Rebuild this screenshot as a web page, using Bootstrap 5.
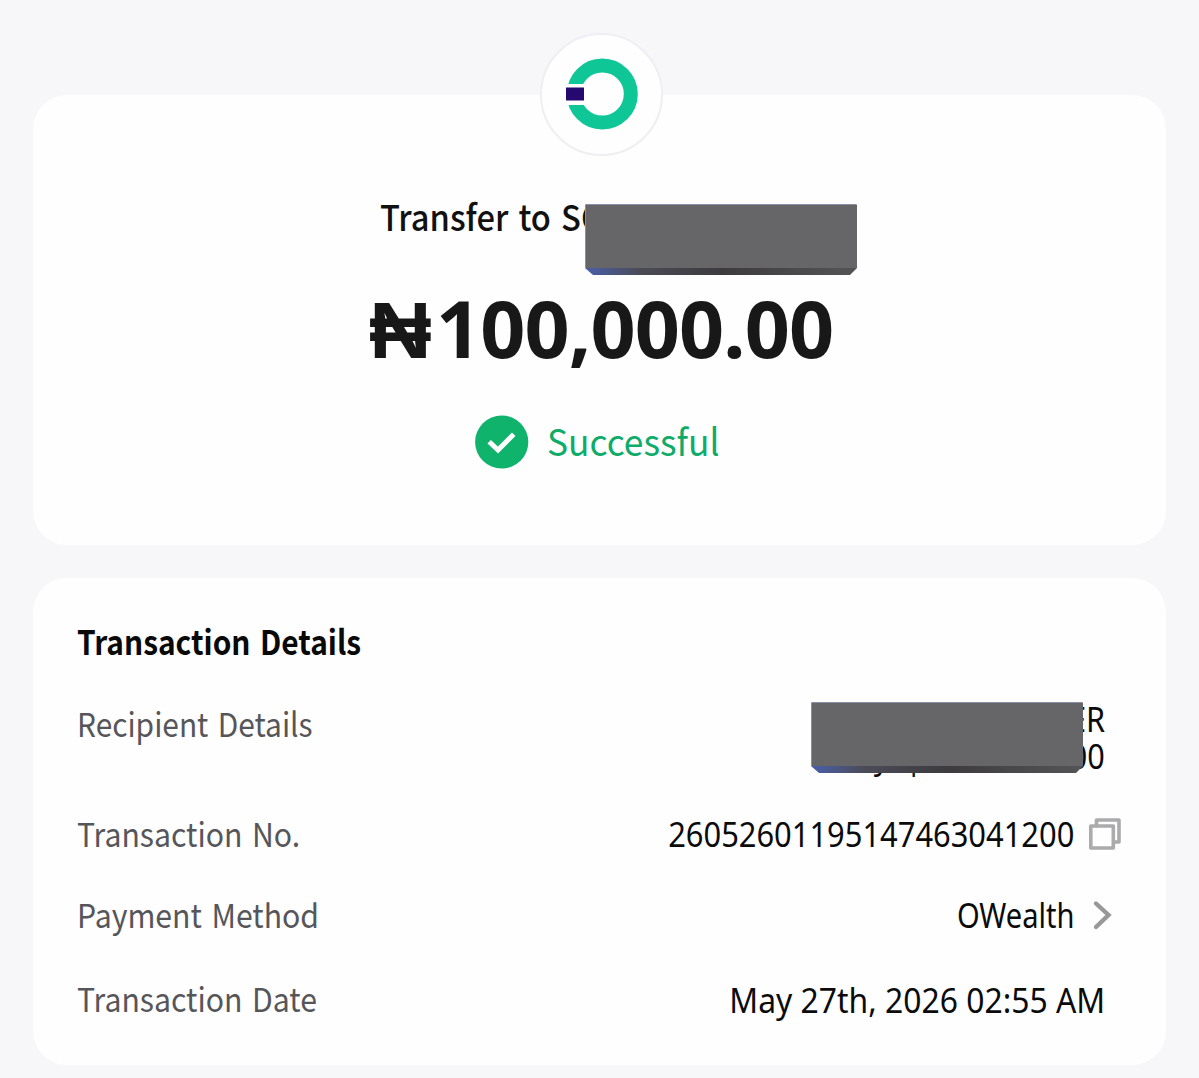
<!DOCTYPE html>
<html lang="en">
<head>
<meta charset="utf-8">
<meta name="viewport" content="width=device-width, initial-scale=1">
<title>Transaction Details</title>
<link href="https://cdn.jsdelivr.net/npm/bootstrap@5.3.0/dist/css/bootstrap.min.css" rel="stylesheet">
<style>
body{background:#f7f7fa;color:#111;font-family:"Noto Sans CJK SC","Noto Sans",sans-serif;height:1078px;overflow:hidden}
.receipt{padding:95px 33px 0;gap:33px}
.panel{background:#fefefe;border-radius:34px}
.summary{height:450px}
.details{height:487px;padding:39px 44px 0}
.brand{top:-62px;left:507px;width:123px;height:123px;background:#fefefe;border:2px solid #efeff3}
.narrow{display:inline-block;transform:scaleX(.915);transform-origin:left center;word-spacing:3px}
.value .narrow{transform-origin:right center;word-spacing:0}
.to-line{margin-top:95px;padding-left:347px;height:52px;line-height:52px;font-size:35.5px;font-weight:500;white-space:pre}
.to-line .narrow{transform:scaleX(.92)}
.cover{width:272px;height:71px}
.cover-a{left:552px;top:109px}
.cover-b{right:83px;top:124px}
.amount{margin-top:36px;padding-left:336px;height:100px;font:700 79px/100px "Noto Sans",sans-serif;letter-spacing:-.9px;color:#181818;white-space:nowrap}
.naira{display:inline-block;font-family:"Liberation Sans","DejaVu Sans",sans-serif;width:67px;letter-spacing:0;line-height:1;transform:scaleX(1.1);transform-origin:left center}
.state{margin-top:37px;padding-left:442px;height:54px;color:#0fab69;font-size:37px;line-height:54px;gap:18px}
.state .narrow{transform:scaleX(.955);margin-top:-4px}
.heading{font-size:33.5px;line-height:48px;font-weight:700;color:#090909;margin:0 0 34px}
.heading .narrow{transform:scaleX(.892)}
.info{height:48px;line-height:48px;font-size:33px;color:#56565a}
.value{font-family:"Noto Sans","Noto Sans CJK SC",sans-serif;font-size:34px;color:#0b0b0b;white-space:nowrap}
.info.recipient{height:110px}
.recipient .narrow{transform:scaleX(.905)}
.recipient .value{line-height:37px;padding:2px 17px 0 0}
.recipient .value .narrow{transform:scaleX(.9)}
.bank{margin-right:164px}
.value-no .narrow{transform:scaleX(.908)}
.value-pay .narrow{transform:scaleX(.855)}
.value-date{padding-right:17px}
.value-date .narrow{transform:scaleX(.937)}
.value-no,.value-pay,.value-date{padding-top:2px}
.value-no svg,.value-pay svg{margin-left:15px;margin-right:1px}
.info-pay{margin-top:33px}
.info-date{margin-top:36px}
</style>
<script src="https://cdn.jsdelivr.net/npm/bootstrap@5.3.0/dist/js/bootstrap.bundle.min.js"></script>
</head>
<body>
<main class="receipt d-flex flex-column">
<section class="panel summary position-relative d-flex flex-column">
  <div class="brand rounded-circle position-absolute">
    <svg width="119" height="119" viewBox="0 0 119 119" class="d-block"><circle cx="60.3" cy="59" r="28.5" fill="none" stroke="#0fc796" stroke-width="14"/><path fill="#fefefe" d="M20 49h22.5v21H20z"/><path fill="#26096f" d="M24 52.5h18v13H24z"/></svg>
  </div>
  <div class="to-line"><span class="narrow">Transfer to SO</span></div>
  <svg class="cover cover-a position-absolute" viewBox="0 0 272 71"><defs><linearGradient id="edge"><stop offset="0" stop-color="#4a5faa"/><stop offset=".2" stop-color="#4b4b57"/><stop offset=".5" stop-color="#3d3b3e"/><stop offset="1" stop-color="#545456"/></linearGradient></defs><path fill="url(#edge)" d="M0 60H272V64L265 71H8L0 64z"/><path fill="#666668" d="M1 0H271L272 1V64H0V1z"/><path fill="#8790a4" d="M0 1h1v63H0zM1 0h270v1H1z"/></svg>
  <div class="amount"><span class="naira">₦</span><span>100,000.00</span></div>
  <div class="state d-flex align-items-center">
    <svg width="54" height="54" viewBox="0 0 54 54"><circle cx="26.7" cy="27" r="26.6" fill="#0fb36c"/><path d="M14.2 26.7L23 35L38.7 19.2" fill="none" stroke="#fff" stroke-width="5"/></svg>
    <span class="narrow">Successful</span>
  </div>
</section>
<section class="panel details position-relative">
  <h1 class="heading"><span class="narrow">Transaction Details</span></h1>
  <div class="info recipient d-flex justify-content-between"><span class="narrow">Recipient Details</span><div class="value text-end"><span class="narrow">ER</span><br><span class="narrow"><span class="bank">y &nbsp;|</span>00</span></div></div>
  <svg class="cover cover-b position-absolute" viewBox="0 0 272 71"><path fill="url(#edge)" d="M0 60H272V64L265 71H8L0 64z"/><path fill="#666668" d="M1 0H271L272 1V64H0V1z"/><path fill="#8790a4" d="M0 1h1v63H0zM1 0h270v1H1z"/></svg>
  <div class="info d-flex justify-content-between"><span class="narrow">Transaction No.</span><div class="value value-no d-flex align-items-center"><span class="narrow">26052601195147463041200</span>
    <svg width="32" height="32" viewBox="0 0 32 32" fill="none" stroke="#ababad" stroke-width="3.6" stroke-linejoin="round"><path d="M7.5 8V2H30V24H25" stroke-linecap="round"/><path d="M1.8 8H24.3V30H1.8z"/></svg></div></div>
  <div class="info info-pay d-flex justify-content-between"><span class="narrow">Payment Method</span><div class="value value-pay d-flex align-items-center"><span class="narrow">OWealth</span><svg width="32" height="32"><path d="M7 4.5l12.5 11.5L7 28" fill="none" stroke="#98989a" stroke-width="4.4" stroke-linecap="round"/></svg></div></div>
  <div class="info info-date d-flex justify-content-between"><span class="narrow">Transaction Date</span><div class="value value-date"><span class="narrow">May 27th, 2026 02:55 AM</span></div></div>
</section>
</main>
</body>
</html>
